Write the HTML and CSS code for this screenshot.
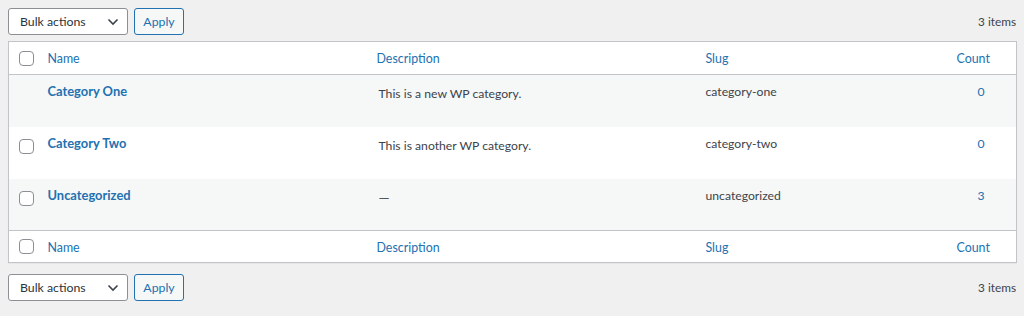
FILE: index.html
```html
<!DOCTYPE html>
<html lang="en">
<head>
<meta charset="utf-8">
<title>Categories</title>
<link rel="stylesheet" href="styles.css">
</head>
<body>
<div class="wrap">
  <div class="tablenav top">
    <div class="actions">
      <div class="select">Bulk actions
        <svg class="chev" width="12" height="8" viewBox="0 0 12 8"><path d="M1.5 1.5 L6 6 L10.5 1.5" fill="none" stroke="#3c434a" stroke-width="1.6"/></svg>
      </div>
      <button class="button">Apply</button>
    </div>
    <span class="count-items">3 items</span>
  </div>

  <table class="list">
    <colgroup>
      <col class="c-cb"><col class="c-name"><col class="c-desc"><col class="c-slug"><col class="c-count">
    </colgroup>
    <thead>
      <tr>
        <td class="cb"><span class="checkbox"></span></td>
        <th class="h-name"><a href="#">Name</a></th>
        <th><a href="#">Description</a></th>
        <th><a href="#">Slug</a></th>
        <th class="num"><a href="#">Count</a></th>
      </tr>
    </thead>
    <tbody>
      <tr class="alt">
        <td class="cb"></td>
        <td class="name"><a href="#">Category One</a></td>
        <td class="desc">This is a new WP category.</td>
        <td class="slug">category-one</td>
        <td class="posts"><a href="#">0</a></td>
      </tr>
      <tr>
        <td class="cb"><span class="checkbox"></span></td>
        <td class="name"><a href="#">Category Two</a></td>
        <td class="desc">This is another WP category.</td>
        <td class="slug">category-two</td>
        <td class="posts"><a href="#">0</a></td>
      </tr>
      <tr class="alt">
        <td class="cb"><span class="checkbox"></span></td>
        <td class="name"><a href="#">Uncategorized</a></td>
        <td class="desc"><span class="dash">—</span></td>
        <td class="slug">uncategorized</td>
        <td class="posts"><a href="#">3</a></td>
      </tr>
    </tbody>
    <tfoot>
      <tr>
        <td class="cb"><span class="checkbox"></span></td>
        <th class="h-name"><a href="#">Name</a></th>
        <th><a href="#">Description</a></th>
        <th><a href="#">Slug</a></th>
        <th class="num"><a href="#">Count</a></th>
      </tr>
    </tfoot>
  </table>

  <div class="tablenav bottom">
    <div class="actions">
      <div class="select">Bulk actions
        <svg class="chev" width="12" height="8" viewBox="0 0 12 8"><path d="M1.5 1.5 L6 6 L10.5 1.5" fill="none" stroke="#3c434a" stroke-width="1.6"/></svg>
      </div>
      <button class="button">Apply</button>
    </div>
    <span class="count-items">3 items</span>
  </div>
</div>
</body>
</html>
```

FILE: styles.css
```css
html, body {
  margin: 0;
  padding: 0;
  background: #f0f0f1;
}
body {
  font-family: Lato, "Open Sans", "Liberation Sans", sans-serif;
  font-size: 12.2px;
  color: #3c434a;
  width: 1024px;
  height: 316px;
  overflow: hidden;
}
.wrap {
  padding: 8px 8px 0 8px;
}
a {
  color: #2271b1;
  text-decoration: none;
}
.tablenav {
  display: flex;
  align-items: center;
  justify-content: space-between;
  height: 27px;
}
.tablenav.top {
  margin-bottom: 6px;
}
.tablenav.bottom {
  margin-top: 11px;
}
.actions {
  display: flex;
  gap: 6px;
  align-items: center;
}
.select {
  box-sizing: border-box;
  width: 120px;
  height: 27px;
  border: 1px solid #8c8f94;
  border-radius: 3px;
  background: #fff;
  display: flex;
  align-items: center;
  justify-content: space-between;
  padding: 0 8px 0 11px;
  color: #2c3338;
  font-size: 12.3px;
}
.chev {
  display: block;
}
.button {
  box-sizing: border-box;
  height: 27px;
  width: 50px;
  padding: 0;
  border: 1px solid #2271b1;
  border-radius: 3px;
  background: #f6f7f7;
  color: #2271b1;
  font-family: inherit;
  font-size: 12.3px;
}
.count-items {
  color: #3c434a;
  font-size: 11.8px;
  line-height: 26px;
}
.list {
  width: 1008px;
  border-collapse: collapse;
  table-layout: fixed;
  background: #fff;
  border: 1px solid #c3c4c7;
  box-shadow: 0 1px 1px rgba(0,0,0,0.04);
}
.c-cb { width: 29px; }
.c-name { width: 329px; }
.c-desc { width: 329px; }
.c-slug { width: 247px; }
.c-count { width: 74px; }

thead tr, tfoot tr {
  background: #fff;
}
thead th, tfoot th, thead td, tfoot td {
  text-align: left;
  font-weight: 400;
  font-size: 12.4px;
  line-height: 20px;
  padding: 1px 10px 0 10px;
}
tfoot th, tfoot td {
  padding-top: 3px;
}
thead tr { height: 33px; border-bottom: 1px solid #c3c4c7; }
tfoot tr { height: 32px; border-top: 1px solid #c3c4c7; }
th.num { text-align: left; padding-left: 14px; }

td.cb {
  padding: 0 0 0 10px;
  vertical-align: middle;
}
tbody td.cb {
  vertical-align: top;
  padding-top: 12px;
}
.checkbox {
  display: block;
  box-sizing: border-box;
  width: 15px;
  height: 15px;
  border: 1px solid #8c8f94;
  border-radius: 4px;
  background: #fff;
}

tbody tr {
  height: 52px;
  background: #fff;
}
tbody tr.alt {
  background: #f6f7f7;
}
tbody td {
  vertical-align: top;
  line-height: 20px;
  padding: 6px 10px 0 10px;
}
td.name a {
  font-weight: 700;
  font-size: 12.9px;
}
td.name {
  padding-top: 6px;
}
td.desc {
  padding-top: 9px;
  padding-left: 12px;
}
.dash {
  display: inline-block;
  font-size: 14px;
  vertical-align: 2px;
  color: #50575e;
}
td.slug {
  padding-top: 7px;
}
td.posts {
  padding-top: 7px;
  padding-left: 35px;
}
```
